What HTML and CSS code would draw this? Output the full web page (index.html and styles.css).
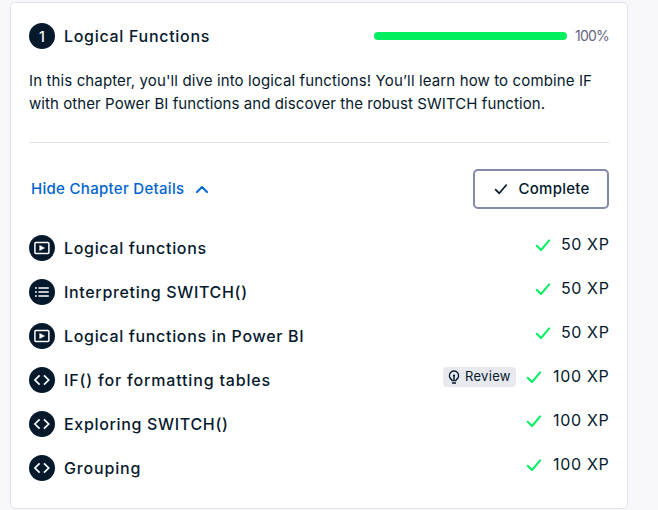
FILE: index.html
```html
<!DOCTYPE html>
<html lang="en">
<head>
<meta charset="utf-8">
<title>Logical Functions</title>
<link rel="stylesheet" href="styles.css">
</head>
<body>
<svg class="defs" width="0" height="0" aria-hidden="true">
  <symbol id="video" viewBox="0 0 26 26"><rect x="5.9" y="7.4" width="14" height="11.2" rx="1" fill="none" stroke="#fff" stroke-width="1.5"/><path d="M10.7 10.4v5.2l4.8-2.6z" fill="#fff" stroke="#fff" stroke-width=".5" stroke-linejoin="round"/></symbol>
  <symbol id="list" viewBox="0 0 26 26"><path d="M9.4 9h10.4M9.4 13h10.4M9.4 17h10.4M6 9h1.8M6 13h1.8M6 17h1.8" stroke="#fff" stroke-width="1.6"/></symbol>
  <symbol id="code" viewBox="0 0 26 26"><path d="M10.6 8.3 5.9 13l4.7 4.7M15 8.3l4.7 4.7-4.7 4.7" fill="none" stroke="#fff" stroke-width="1.7"/></symbol>
  <symbol id="check" viewBox="0 0 16 14"><path d="M1.7 7.7 6 12 14.2 2.4" fill="none" stroke="currentColor" stroke-width="2" stroke-linecap="round" stroke-linejoin="round"/></symbol>
</svg>
<main class="card">
  <header class="head">
    <span class="badge">1</span>
    <h1 class="title">Logical Functions</h1>
    <div class="bar"></div>
    <span class="percent">100%</span>
  </header>
  <p class="desc"><span class="d1">In this chapter, you'll dive into logical functions! You’ll learn how to combine IF</span><br><span class="d2">with other Power BI functions and discover the robust SWITCH function.</span></p>
  <div class="actions">
    <a class="toggle"><span>Hide Chapter Details</span><svg width="12" height="8" viewBox="0 0 12 8"><path d="M1 7 6 2l5 5" fill="none" stroke="currentColor" stroke-width="2" stroke-linecap="round" stroke-linejoin="round"/></svg></a>
    <button class="complete"><svg width="14" height="12"><use href="#check"/></svg><span>Complete</span></button>
  </div>
  <ul class="list">
    <li><span class="badge"><svg width="26" height="26"><use href="#video"/></svg></span><span class="name">Logical functions</span><span class="xp"><svg width="16" height="14"><use href="#check"/></svg><b class="x50">50 XP</b></span></li>
    <li><span class="badge"><svg width="26" height="26"><use href="#list"/></svg></span><span class="name">Interpreting SWITCH()</span><span class="xp"><svg width="16" height="14"><use href="#check"/></svg><b class="x50">50 XP</b></span></li>
    <li><span class="badge"><svg width="26" height="26"><use href="#video"/></svg></span><span class="name">Logical functions in Power BI</span><span class="xp"><svg width="16" height="14"><use href="#check"/></svg><b class="x50">50 XP</b></span></li>
    <li><span class="badge"><svg width="26" height="26"><use href="#code"/></svg></span><span class="name wide">IF() for formatting tables</span><span class="review"><svg width="12" height="14" viewBox="0 0 12 14"><path d="M3.7 10.2V9.6A4.6 4.6 0 1 1 8.3 9.6v.6M6 5.6v5.6M3.4 10.6h1.8M6.8 10.6h1.8M4 13h4" fill="none" stroke="currentColor" stroke-width="1.4"/><circle cx="6" cy="5.6" r="1.1" fill="currentColor"/></svg><span>Review</span></span><span class="xp"><svg width="16" height="14"><use href="#check"/></svg><b class="x100">100 XP</b></span></li>
    <li><span class="badge"><svg width="26" height="26"><use href="#code"/></svg></span><span class="name">Exploring SWITCH()</span><span class="xp"><svg width="16" height="14"><use href="#check"/></svg><b class="x100">100 XP</b></span></li>
    <li><span class="badge"><svg width="26" height="26"><use href="#code"/></svg></span><span class="name wide">Grouping</span><span class="xp"><svg width="16" height="14"><use href="#check"/></svg><b class="x100">100 XP</b></span></li>
  </ul>
</main>
</body>
</html>
```
FILE: styles.css
```css
* { box-sizing: border-box; }
body { margin: 0; height: 510px; overflow: hidden; padding: 2px 0 0 10px; background: #f7f7fc; color: #05192d; font-family: Inter, "Open Sans", sans-serif; }
svg { display: block; flex: none; }
.defs { position: absolute; }
.card { width: 618px; height: 507px; padding: 20px 18px 0; background: #fff; border: 1px solid #e1e1eb; border-radius: 5px; }
.head { display: flex; align-items: center; height: 26px; }
.badge { flex: none; display: flex; align-items: center; justify-content: center; width: 26px; height: 26px; border-radius: 50%; background: #05192d; color: #fff; font-size: 14px; font-weight: 500; }
.title { flex: 1; margin: 0 0 0 9px; font-size: 16px; font-weight: 500; line-height: 20px; letter-spacing: .7px; white-space: nowrap; }
.bar { width: 193px; height: 8px; border-radius: 4px; background: #03ef62; }
.percent { width: 34px; margin: 0 0 2px 8px; font-size: 14px; letter-spacing: -.75px; color: #65657b; white-space: nowrap; }
.desc { margin: 20px 0 0; height: 74px; border-bottom: 1px solid #e1e1eb; font-size: 15px; line-height: 23px; white-space: nowrap; }
.d1 { letter-spacing: .125px; }
.d2 { letter-spacing: .075px; }
.actions { display: flex; align-items: center; justify-content: space-between; height: 40px; margin-top: 26px; }
.toggle { display: flex; align-items: center; gap: 12px; margin-left: 2px; color: #0065d1; font-size: 15px; font-weight: 500; letter-spacing: .3px; }
.toggle span, .complete span { margin-bottom: 2px; }
.complete { display: flex; align-items: center; gap: 11px; width: 136px; height: 40px; padding: 0 0 0 18.5px; background: #fff; border: 2px solid #848ba8; border-radius: 5px; color: #05192d; font: 500 15px Inter, sans-serif; letter-spacing: .25px; }
.list { margin: 17px 0 0; padding: 0; list-style: none; }
.list li { display: flex; align-items: center; height: 44px; }
.name { flex: 1; margin-left: 9px; font-size: 16px; font-weight: 500; line-height: 20px; letter-spacing: .67px; white-space: nowrap; }
.wide { letter-spacing: .83px; }
.xp { display: flex; align-items: center; margin-bottom: 7px; color: #03ef62; }
.xp b { margin-bottom: 2px; color: #05192d; font-size: 16px; font-weight: 400; line-height: 20px; white-space: nowrap; }
.xp .x50 { width: 48px; margin-left: 10px; letter-spacing: .6px; }
.xp .x100 { width: 56px; margin-left: 11px; letter-spacing: .7px; }
.review { display: flex; align-items: center; gap: 5px; width: 73px; height: 20px; margin: 0 10px 7px 0; padding-left: 5px; background: #e8e8ef; border-radius: 4px; font-size: 13px; letter-spacing: .3px; }
.review span { margin-bottom: 1px; }
```
